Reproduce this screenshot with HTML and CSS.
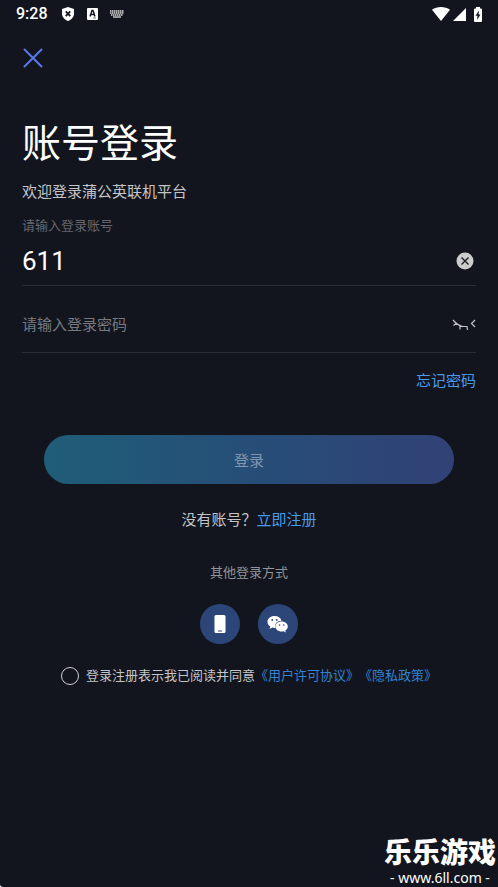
FILE: index.html
```html
<!DOCTYPE html>
<html lang="zh-CN">
<head>
<meta charset="utf-8">
<meta name="viewport" content="width=device-width, initial-scale=1">
<title>账号登录</title>
<link rel="stylesheet" href="styles.css">
</head>
<body>
<div class="app">
  <header class="status">
    <time class="clock">9:28</time>
    <svg class="shield" width="12" height="14" viewBox="0 0 12 14" aria-hidden="true"><path fill="#fff" d="M6 0l6 2v4.600c0 3.400-2.500 6.200-6 7.400-3.500-1.200-6-4-6-7.400V2z"/><path d="M3.700 4.300l4.600 4.800M8.300 4.300L3.700 9.100" stroke="#12151e" stroke-width="1.700"/></svg>
    <svg class="letter" width="11" height="12" viewBox="0 0 11 12" aria-hidden="true"><rect width="11" height="12" rx="1" fill="#fff"/><path d="M3 8.500l2-6h1l2 6M3.800 6.500h3.400" fill="none" stroke="#12151e" stroke-width="1.400"/><path d="M6 10h3" stroke="#12151e" stroke-width=".6"/></svg>
    <svg class="keys" width="14" height="8" viewBox="0 0 14 8" aria-hidden="true"><path d="M0 1h14M0 3h14M1 5h12" stroke="#ddd" stroke-width="1.300" stroke-dasharray="1.500 .5"/><path d="M3 7h8" stroke="#ddd" stroke-width="1.300"/></svg>
    <svg class="wifi" width="18" height="14" viewBox="0 0 18 14" aria-hidden="true"><path fill="#fff" d="M0 2.700C5-.9 13-.9 18 2.700L9 14z"/></svg>
    <svg class="signal" width="13" height="13" viewBox="0 0 13 13" aria-hidden="true"><path fill="#fff" d="M13 0v13H0z"/></svg>
    <svg class="battery" width="8" height="15" viewBox="0 0 8 15" aria-hidden="true"><path fill="#fff" d="M2 0h4v1.500h1q1 0 1 1V14q0 1-1 1H1q-1 0-1-1V2.500q0-1 1-1h1z"/><path fill="#12151e" d="M5 3.500L1.500 8.700h2L3 13l3.500-5.500h-2z"/></svg>
  </header>
  <main class="page">
    <button class="close" type="button" aria-label="关闭"><svg width="20" height="20" viewBox="0 0 20 20"><path d="M1.500 1.500l17 17M18.500 1.500l-17 17" stroke="#5b78e8" stroke-width="2" stroke-linecap="round"/></svg></button>
    <h1 class="title">账号登录</h1>
    <p class="welcome">欢迎登录蒲公英联机平台</p>
    <form class="form">
      <label class="hint" for="account">请输入登录账号</label>
      <div class="field">
        <input id="account" class="input account" type="text" value="611">
        <button class="icon" type="button" aria-label="清除"><svg width="22" height="18" viewBox="0 0 22 18"><circle cx="11" cy="9" r="8.500" fill="#ccc"/><path d="M7.500 5.500l7 7M14.500 5.500l-7 7" stroke="#191c24" stroke-width="1.400"/></svg></button>
      </div>
      <div class="field secret">
        <input class="input" type="password" placeholder="请输入登录密码" aria-label="请输入登录密码">
        <button class="icon" type="button" aria-label="显示密码"><svg width="24" height="12" viewBox="0 0 24 12" fill="none" stroke="#c4c5c9" stroke-width="1.200"><path d="M1 1c3 3.500 6 6.200 10 6.500h4.500M4.500 4.200L1.500 6.500M8 7v3.500M15 7.500l.5 3.500M23 1l-3.500 3.500L23 8"/></svg></button>
      </div>
      <a class="link forgot" href="#">忘记密码</a>
      <button class="submit" type="button">登录</button>
    </form>
    <p class="register">没有账号？<a class="link" href="#">立即注册</a></p>
    <p class="other">其他登录方式</p>
    <div class="methods">
      <button class="round" type="button" aria-label="手机登录"><svg width="12" height="20" viewBox="0 0 12 20"><rect x=".5" y="1" width="11" height="18" rx="1.500" fill="#fff"/><path d="M4 17h4" stroke="#2d4679" stroke-width="1"/></svg></button>
      <button class="round" type="button" aria-label="微信登录"><svg width="22" height="18" viewBox="0 0 22 18"><path fill="#fff" d="M7.500 1C3.500 1 .5 3.500.5 6.800c0 2 1 3.600 2.800 4.700L2.600 14l2.700-1.400q1.300.4 2.900.3C7.400 8.500 10.500 5.600 14.600 5.700 13.800 2.800 11 1 7.500 1z"/><path fill="#fff" d="M14.600 6.500c-3.500 0-6.300 2.200-6.300 5s2.800 5 6.300 5q1 0 2-.3l2.200 1.300-.5-2c1.400-.9 2.500-2.300 2.500-4 0-2.800-2.700-5-6.200-5z"/><g fill="#2d4679"><circle cx="5.200" cy="5" r=".9"/><circle cx="9.700" cy="5" r=".9"/><circle cx="12.600" cy="10" r=".8"/><circle cx="16.700" cy="10" r=".8"/></g></svg></button>
    </div>
    <div class="agree">
      <input id="agree" class="check" type="checkbox">
      <label for="agree">登录注册表示我已阅读并同意</label><a class="terms" href="#">《用户许可协议》</a><a class="terms" href="#">《隐私政策》</a>
    </div>
  </main>
  <div class="mark"><strong class="brand">乐乐游戏</strong><span class="site">- www.6ll.com -</span></div>
</div>
</body>
</html>
```
FILE: styles.css
```css
* { box-sizing: border-box; }
html { background: #fff; }
body { margin: 0; font-family: Roboto, "Noto Sans CJK SC", sans-serif; font-size: 15px; color: #c4c5c9; }
h1, p { margin: 0; font-weight: 400; }
button { border: 0; padding: 0; background: none; font: inherit; cursor: pointer; }
svg { display: block; }
a { text-decoration: none; }
.app { position: relative; min-height: 100vh; background: #12151e; border-bottom-left-radius: 3px; }
.status { display: flex; align-items: center; height: 28px; padding: 0 16px; }
.clock { color: #fff; font-size: 16px; font-weight: 500; line-height: 28px; }
.shield { margin-left: 14px; }
.letter { margin-left: 13px; }
.keys { margin-left: 12px; }
.wifi { margin-left: auto; }
.signal { margin-left: 3px; }
.battery { margin-left: 8px; }
.page { padding: 20px 22px 60px; }
.close { display: block; margin-left: 1px; }
.title { margin-top: 48px; font-size: 39px; line-height: 56px; color: #fff; }
.welcome { margin-top: 8px; line-height: 24px; }
.form { display: flex; flex-direction: column; }
.hint { margin-top: 12px; font-size: 13px; line-height: 20px; color: #65676e; }
.field { display: flex; align-items: center; height: 50px; border-bottom: 1px solid #2a2d35; }
.secret { height: 67px; padding-top: 12px; }
.input { flex: 1; min-width: 0; height: 40px; padding: 0; border: 0; outline: 0; background: none; color: #fff; font: inherit; }
.input::placeholder { color: #777980; opacity: 1; }
.account { font-size: 26px; }
.link { color: #4a9bed; }
.forgot { align-self: flex-end; margin-top: 16px; line-height: 24px; }
.submit { height: 49px; margin: 42px 22px 0; border-radius: 25px; background: linear-gradient(90deg, #1f5d78, #264e77 50%, #314176); color: #8196b0; }
.register { margin-top: 24px; text-align: center; line-height: 24px; }
.other { margin-top: 30px; text-align: center; font-size: 13px; line-height: 22px; color: #929397; }
.methods { display: flex; justify-content: center; gap: 18px; margin-top: 20px; }
.round { display: grid; place-items: center; width: 40px; height: 40px; border-radius: 50%; background: #2d4679; }
.agree { display: flex; align-items: center; justify-content: center; margin-top: 20px; font-size: 13px; line-height: 24px; white-space: nowrap; }
.check { appearance: none; width: 18px; height: 18px; margin: 0 7px 0 0; border: 1px solid #d0d1d4; border-radius: 50%; }
.terms { color: #3383d2; }
.mark { position: absolute; right: 2px; bottom: 0; display: flex; flex-direction: column; align-items: center; color: #fff; }
.brand { font-size: 28px; font-weight: 900; line-height: 30px; }
.site { font-family: "Noto Sans", sans-serif; font-size: 14px; line-height: 18px; }
```
